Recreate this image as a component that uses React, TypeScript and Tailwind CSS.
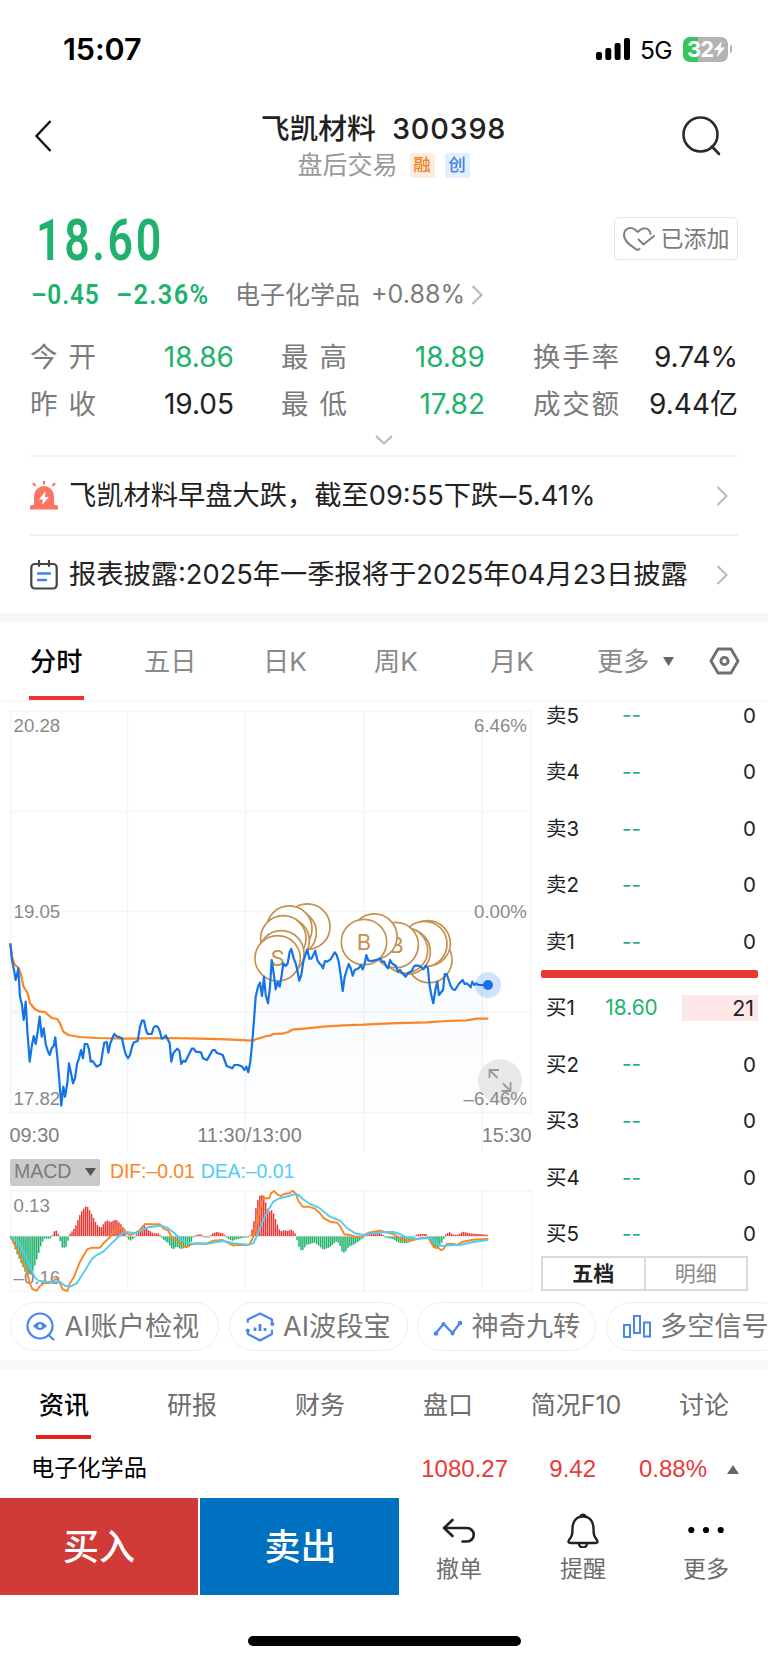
import type { ReactNode } from 'react'

// chart samples are stored at 3x density, [x, y, x, y, ...]
const PRICE_AM = [31,130,36,180,42,210,47,240,50,228,55,205,60,290,66,315,71,360,77,305,82,390,89,485,95,440,101,408,107,432,113,395,119,350,125,410,131,385,137,432,143,452,149,465,155,445,161,438,166,412,172,470,178,540,184,617,190,560,195,590,202,550,207,490,213,520,219,550,225,535,231,492,237,475,243,450,249,475,254,432,262,432,267,448,272,485,278,483,284,492,290,500,302,493,308,455,313,428,320,426,325,458,331,430,337,415,343,402,349,408,366,415,372,445,378,465,384,475,390,465,396,440,402,427,413,423,420,380,426,362,432,362,438,390,443,402,455,402,461,382,467,378,473,380,479,392,485,416,491,414,497,406,503,418,509,430,514,485,520,460,526,452,532,446,538,452,544,492,550,482,556,485,562,473,575,446,581,446,587,455,603,457,609,475,621,480,638,450,644,450,650,458,668,465,680,498,697,505,703,495,715,495,727,500,733,510,739,500]
const PRICE_PM = [25,577,31,545,37,485,42,420,47,350,54,320,60,308,66,348,72,290,77,345,84,370,90,320,95,240,101,280,107,328,113,305,119,320,125,285,130,250,137,258,143,250,149,215,154,207,161,235,167,250,172,270,178,302,184,285,190,245,196,225,202,208,208,236,214,236,220,225,226,212,232,240,238,250,244,255,249,265,255,243,261,245,272,238,284,217,290,225,296,245,302,285,308,333,314,290,320,270,326,252,332,265,338,287,344,270,356,265,362,255,368,268,374,250,379,225,385,242,397,243,415,238,421,235,427,245,433,245,439,260,445,265,450,240,456,250,468,258,474,275,480,270,486,278,497,290,503,280,515,273,521,260,527,256,540,258,550,268,558,257,564,265,568,310,574,345,580,370,586,330,592,305,597,345,609,330,614,282,620,282,626,300,632,318,638,328,645,330,656,312,668,300,674,312,680,310,686,315,692,322,697,305,703,315,709,310,715,315,745,315]
const AVG_AM = [31,130,37,175,45,195,55,203,62,220,70,258,83,280,90,310,105,328,118,334,135,336,155,354,172,357,180,370,190,395,205,405,240,411,290,414,380,416,500,414,600,416,680,418]
const AVG_PM = [38,482,50,477,80,468,90,467,100,462,125,461,145,456,157,449,200,445,250,440,310,436,370,434,450,430,560,427,620,423,680,421,710,416,745,416]
const DIF_AM = [31,379,40,395,55,425,70,465,80,480,88,515,97,537,110,542,120,528,135,518,155,518,165,508,172,508,180,520,188,538,202,543,210,520,222,500,240,455,262,418,275,413,300,413,315,395,330,382,345,360,362,352,370,355,380,370,390,375,400,372,418,362,435,342,450,343,480,343,490,355,505,362,515,382,535,393,548,407,560,412,575,403,590,400,620,401,640,392,668,390,690,402,700,406]
const DIF_PM = [28,404,38,385,48,350,60,295,70,265,88,265,93,250,102,243,112,253,122,258,132,252,148,250,158,242,168,252,175,272,188,290,205,290,225,296,240,310,252,325,270,335,292,338,302,352,313,373,330,375,345,380,365,380,385,368,420,362,440,367,460,372,480,385,500,394,520,390,540,385,565,383,575,400,582,412,595,413,603,420,610,418,620,402,640,402,650,405,668,395,700,389,745,387]
const DEA_AM = [31,379,45,388,60,405,75,435,90,468,103,500,115,512,140,515,165,515,180,515,195,527,210,530,230,520,250,490,275,448,290,435,310,425,340,395,370,367,385,367,410,370,425,360,445,352,480,347,500,352,520,367,545,390,570,401,620,401,670,393,700,400]
const DEA_PM = [25,404,40,400,52,375,70,330,85,300,100,275,120,264,150,257,165,252,175,254,188,267,210,282,235,292,270,320,300,332,320,353,345,370,370,375,400,370,430,367,460,366,480,372,500,383,530,386,570,384,590,400,605,408,630,406,660,405,700,396,745,390]
// macd histogram envelope, [x, height, ...]
const HIST = [31,0,36,-12,48,-45,60,-72,77,-110,95,-115,110,-70,125,-20,135,-5,150,-8,158,4,166,20,172,12,179,-4,184,-32,196,-35,202,-25,207,3,225,25,243,72,260,92,272,72,290,35,302,24,319,48,332,42,348,50,366,32,378,5,384,-8,392,-12,402,-5,412,8,430,35,443,20,460,8,475,8,482,2,488,-8,505,-20,518,-40,530,-30,542,-38,568,-30,580,-3,590,4,604,5,613,-3,628,-3,638,8,650,12,668,8,676,2,682,-6,697,-13,712,-8,735,-3,748,-3,755,15,762,45,768,85,774,110,782,125,792,120,798,97,806,72,815,78,822,65,830,40,838,20,845,14,852,18,862,15,875,20,883,12,888,3,892,-15,898,-35,905,-45,913,-35,920,-25,945,-18,970,-40,990,-32,1008,-15,1017,-20,1028,-50,1035,-48,1045,-32,1065,-22,1080,-12,1092,-3,1100,8,1140,8,1152,2,1160,-4,1180,-8,1195,-18,1220,-20,1240,-12,1245,3,1258,6,1282,6,1287,-8,1295,-25,1305,-38,1320,-30,1332,-5,1338,6,1348,12,1360,4,1375,4,1388,13,1410,8,1435,6,1465,4]

const MARKS_SELL = [[202, 140], [161, 158], [148, 146], [140, 182], [130, 175], [124, 220], [113, 235]]
const MARKS_BUY = [[568, 240], [563, 190], [553, 192], [503, 215], [495, 211], [467, 195], [403, 170], [372, 186]]

function place(data: number[], ox: number, oy: number) {
  const out: string[] = []
  for (let i = 0; i < data.length; i += 2) out.push(`${(ox + data[i] / 3).toFixed(1)},${(oy + data[i + 1] / 3).toFixed(1)}`)
  return out.join(' ')
}

function histAt(x: number) {
  for (let i = 2; i < HIST.length; i += 2) {
    if (x <= HIST[i]) {
      const t = (x - HIST[i - 2]) / (HIST[i] - HIST[i - 2])
      return HIST[i - 1] + t * (HIST[i + 1] - HIST[i - 1])
    }
  }
  return 0
}

const pricePoints = place(PRICE_AM, 0, 900) + ' ' + place(PRICE_PM, 240, 880)
const avgPoints = place(AVG_AM, 0, 900) + ' ' + place(AVG_PM, 240, 880)
const bars = Array.from({ length: 244 }, (_, i) => {
  const x = 34 + i * 5.87
  return { x: x / 3, h: histAt(x) / 3 }
})

function Chevron({ className }: { className?: string }) {
  return (
    <svg className={className} viewBox="0 0 12 20" fill="none" stroke="#b8b8b8" strokeWidth="2">
      <path d="M1.5 1 L10.5 10 L1.5 19" />
    </svg>
  )
}

function StatusBar() {
  return (
    <div className="flex h-[98px] items-center pl-[63px] pr-[36px]">
      <span className="mt-[1px] text-[30.5px] font-semibold leading-none tracking-[-0.1px] text-black">15:07</span>
      <svg className="ml-auto mr-[10px] h-[22px] w-[34px]" viewBox="0 0 34 22">
        <rect x="0" y="14" width="6" height="8" rx="2" />
        <rect x="9.3" y="10" width="6" height="12" rx="2" />
        <rect x="18.6" y="5" width="6" height="17" rx="2" />
        <rect x="28" y="0" width="6" height="22" rx="2" />
      </svg>
      <span className="mr-[11px] mt-[2px] w-[32px] text-[24.5px] leading-none tracking-[-0.6px] text-black">5G</span>
      <div className="relative flex h-[25px] w-[45px] items-center overflow-hidden rounded-[7px] bg-[#b3b3b3] pl-[4px]">
        <div className="absolute inset-y-0 left-0 w-[15px] bg-[#34c759]" />
        <span className="relative text-[22px] font-bold leading-none tracking-[-1px] text-white">32</span>
        <svg className="relative ml-[1px] h-[16px] w-[11px]" viewBox="0 0 11 16" fill="#fff">
          <path d="M8 0 L0 9 H4.6 L3 16 L11 6.6 H6.4 Z" />
        </svg>
      </div>
      <div className="ml-[2px] h-[8px] w-[2px] rounded-r-full bg-[#b3b3b3]" />
    </div>
  )
}

function Header() {
  return (
    <div className="flex h-[100px] items-start justify-between pl-[34px] pr-[47px]">
      <svg className="mt-[21px] h-[34px] w-[18px]" viewBox="0 0 18 34" fill="none" stroke="#111" strokeWidth="2.4">
        <path d="M16.5 2 L2.5 17 L16.5 32" />
      </svg>
      <div className="ml-[34px] flex flex-col items-center">
        <div className="mt-[15px] flex h-[32px] items-center gap-[16px] text-[28.8px] font-medium leading-none text-[#222]">
          <span>飞凯材料</span>
          <span className="tracking-[0.8px]">300398</span>
        </div>
        <div className="mt-[7px] flex h-[26px] items-center text-[25px] leading-none text-[#999]">
          <span className="mr-[12px]">盘后交易</span>
          <span className="mr-[10px] flex h-[25px] w-[25px] items-center justify-center rounded-[2px] bg-[#fdeee2] text-[17.5px] font-medium text-[#f5811f]">融</span>
          <span className="flex h-[25px] w-[25px] items-center justify-center rounded-[2px] bg-[#e5eefd] text-[17.5px] font-medium text-[#4480ee]">创</span>
        </div>
      </div>
      <svg className="mt-[18px] h-[40px] w-[40px]" viewBox="0 0 40 40" fill="none" stroke="#2a2a33" strokeWidth="2.6" strokeLinecap="round">
        <circle cx="19.5" cy="18.5" r="17" />
        <path d="M31 30.5 L38 38" />
      </svg>
    </div>
  )
}

function Stat({ label, value, color }: { label: string; value: string; color: string }) {
  return (
    <>
      <span className="flex justify-between text-[#7b7b7b]">{[...label].map(c => <span key={c}>{c}</span>)}</span>
      <span className={`text-right text-[28px] ${color}`}>{value}</span>
    </>
  )
}

function Quote() {
  const green = 'text-[#20b26c]'
  return (
    <div className="h-[257px]">
      <div className="flex h-[79px] items-start justify-between pl-[36px] pr-[30px] pt-[9px]">
        <span className="origin-left scale-x-[0.77] font-[Roboto] text-[58px] font-semibold leading-[67px] tracking-[3.4px] text-[#20b26c]">18.60</span>
        <div className="mt-[10px] flex h-[43px] w-[124px] items-center justify-center gap-[6px] rounded-[4px] border border-[#e8e8e8] pt-[1px] text-[23px] leading-none text-[#7b7b7b]">
          <svg className="h-[26px] w-[32px]" viewBox="0 0 32 26" fill="none" stroke="#808080" strokeWidth="2" strokeLinecap="round" strokeLinejoin="round">
            <path d="M27.5 8 C27 3 21 0 16.5 4.5 L14.8 6 L13 4.5 C8.500 -0.5 1 2.500 1 9 C1 16 9 20.500 13.500 23.500 Q15 24.500 16.500 22.800" />
            <path d="M15.500 13.500 L20.500 18.500 L31 10" />
          </svg>
          <span>已添加</span>
        </div>
      </div>
      <div className="flex h-[36px] items-center pl-[31px] leading-none">
        <span className="w-[85px]">
          <span className="inline-block origin-left scale-x-[0.86] font-[Roboto] text-[28.5px] font-semibold tracking-[0.9px] text-[#20b26c]">–0.45</span>
        </span>
        <span className="w-[119px]">
          <span className="inline-block origin-left scale-x-[0.89] font-[Roboto] text-[28.5px] font-semibold tracking-[1.5px] text-[#20b26c]">–2.36%</span>
        </span>
        <span className="w-[136px] text-[25px] text-[#7b7b7b]">电子化学品</span>
        <span className="w-[100px] whitespace-nowrap text-[25.1px] text-[#7b7b7b]">+0.88%</span>
        <Chevron className="h-[20px] w-[12px]" />
      </div>
      <div className="mt-[20.500px] grid grid-cols-[66px_138px_47px_66px_138px_48px_86px_119px] pl-[30px] text-[27.5px] leading-[47px]">
        <Stat label="今开" value="18.86" color={green} /><span />
        <Stat label="最高" value="18.89" color={green} /><span />
        <Stat label="换手率" value="9.74%" color="text-[#222]" />
        <Stat label="昨收" value="19.05" color="text-[#222]" /><span />
        <Stat label="最低" value="17.82" color={green} /><span />
        <Stat label="成交额" value="9.44亿" color="text-[#222]" />
      </div>
      <svg className="mx-auto mt-[7px] h-[10px] w-[18px]" viewBox="0 0 18 10" fill="none" stroke="#bbb" strokeWidth="2.2">
        <path d="M1 1 L9 8.500 L17 1" />
      </svg>
    </div>
  )
}

function Notice({ icon, children }: { icon: ReactNode; children: ReactNode }) {
  return (
    <div className="mx-[30px] flex h-[79px] items-center border-t-2 border-[#f2f2f2] text-[27.250px] leading-none text-[#222]">
      <span className="mr-[11px] w-[28px]">{icon}</span>
      <span className="whitespace-nowrap">{children}</span>
      <Chevron className="ml-auto mr-[10px] h-[20px] w-[12px]" />
    </div>
  )
}

function ChartTabs() {
  return (
    <div className="flex h-[80px] items-center border-b-2 border-[#f7f7f7] pl-[30px] pr-[28px] text-[26.200px] leading-none text-[#8a8a8a]">
      <span className="relative flex h-[78px] w-[114px] items-center pt-[3px] font-medium text-black">
        分时
        <span className="absolute bottom-0 left-[-1px] h-[4px] w-[55px] bg-[#ee3431]" />
      </span>
      <span className="w-[119px] pt-[3px]">五日</span>
      <span className="w-[111px] pt-[3px]">日K</span>
      <span className="w-[116px] pt-[3px]">周K</span>
      <span className="w-[107px] pt-[3px]">月K</span>
      <span className="w-[66px] pt-[3px]">更多</span>
      <svg className="h-[9px] w-[11px]" viewBox="0 0 11 9" fill="#666"><path d="M0 0 H11 L5.500 9 Z" /></svg>
      <svg className="ml-auto h-[28px] w-[31px]" viewBox="0 0 31 28" fill="none" stroke="#6f6f6f" strokeWidth="2.8" strokeLinejoin="round">
        <path d="M9 2 H22 L29 14 L22 26 H9 L2 14 Z" />
        <circle cx="15.500" cy="14" r="3.600" />
      </svg>
    </div>
  )
}

function PriceChart() {
  return (
    <svg className="block h-[450px] w-[541px]" viewBox="0 702 541 450">
      <defs>
        <linearGradient id="area" x1="0" y1="0" x2="0" y2="1">
          <stop offset="0" stopColor="#1673e6" stopOpacity="0.035" />
          <stop offset="1" stopColor="#1673e6" stopOpacity="0.01" />
        </linearGradient>
      </defs>
      <g fill="none" stroke="#f5f5f5" strokeWidth="1.500">
        <path d="M10.500 711.500 H531 V1112.500 H10.500 Z M10 811.500 H531 M10 911.500 H531 M10 1012 H531" />
        <path d="M127.500 711 V1152 M245.500 711 V1152 M364 711 V1152 M482 711 V1152" />
      </g>
      <g fill="#fff" stroke="#c4924f" strokeWidth="1.700">
        {MARKS_SELL.map(([x, y], i) => <circle key={i} cx={240 + x / 3} cy={880 + y / 3} r="22.700" />)}
        {MARKS_BUY.slice(0, 6).map(([x, y], i) => <circle key={i} cx={240 + x / 3} cy={880 + y / 3} r="22.700" />)}
      </g>
      <text x="396.500" y="953" textAnchor="middle" fontSize="22" fill="#c4924f">B</text>
      <g fill="#fff" stroke="#c4924f" strokeWidth="1.700">
        {MARKS_BUY.slice(6).map(([x, y], i) => <circle key={i} cx={240 + x / 3} cy={880 + y / 3} r="22.700" />)}
      </g>
      <text x="364" y="950" textAnchor="middle" fontSize="22" fill="#c4924f">B</text>
      <text x="277.500" y="966" textAnchor="middle" fontSize="22" fill="#c4924f">S</text>
      <polygon points={`10.500,1112 ${pricePoints} 488,1112`} fill="url(#area)" />
      <polyline points={avgPoints} fill="none" stroke="#fb8621" strokeWidth="2.200" strokeLinejoin="round" />
      <polyline points={pricePoints} fill="none" stroke="#1673e6" strokeWidth="2.200" strokeLinejoin="round" />
      <circle cx="488" cy="985" r="13" fill="#1673e6" fillOpacity="0.200" />
      <circle cx="488" cy="985" r="5" fill="#1673e6" />
      <circle cx="500" cy="1081" r="22" fill="#e6e6e6" fillOpacity="0.900" />
      <g fill="none" stroke="#999" strokeWidth="1.800">
        <path d="M489.500 1078 V1070 H499 M490 1070.500 L497.500 1078" />
        <path d="M501.500 1091 H510.500 V1082 M503 1083.500 L510 1090.500" />
      </g>
      <g fontSize="18.700" fill="#8a8a8a" className="font-['Liberation_Sans']">
        <text x="13.500" y="731.500">20.28</text>
        <text x="13.500" y="918">19.05</text>
        <text x="13.500" y="1105">17.82</text>
        <text x="527" y="731.500" textAnchor="end">6.46%</text>
        <text x="527" y="918" textAnchor="end">0.00%</text>
        <text x="527" y="1105" textAnchor="end">–6.46%</text>
      </g>
      <g fontSize="19.900" fill="#808080" className="font-['Liberation_Sans']">
        <text x="9.500" y="1142">09:30</text>
        <text x="249.500" y="1142" textAnchor="middle" letterSpacing="0.1">11:30/13:00</text>
        <text x="531.500" y="1142" textAnchor="end">15:30</text>
      </g>
    </svg>
  )
}

function MacdChart() {
  return (
    <svg className="block h-[104px] w-[541px]" viewBox="0 1190 541 104">
      <g fill="none" stroke="#f5f5f5" strokeWidth="1.500">
        <path d="M10.500 1191 H531.500 V1291.500 H10.500 Z M127.500 1191 V1291 M245.500 1191 V1291 M364 1191 V1291 M482 1191 V1291" />
        <path d="M10 1236.300 H488" stroke="#d9d9d9" strokeWidth="0.800" />
      </g>
      {bars.map(b => (
        <rect key={b.x} x={b.x - 0.75} y={b.h > 0 ? 1236 - b.h : 1236.500} width="1.500" height={Math.max(Math.abs(b.h), 0.8)} fill={b.h > 0 ? '#e93a37' : '#20b26c'} />
      ))}
      <g fontSize="18.700" fill="#8a8a8a" className="font-['Liberation_Sans']">
        <text x="13.500" y="1211.500">0.13</text>
        <text x="13.500" y="1284">–0.16</text>
      </g>
      <g fill="none" strokeWidth="1.900" strokeLinejoin="round">
        <polyline points={place(DIF_AM, 0, 1110) + ' ' + place(DIF_PM, 240, 1110)} stroke="#fb8621" />
        <polyline points={place(DEA_AM, 0, 1110) + ' ' + place(DEA_PM, 240, 1110)} stroke="#4fcdf3" />
      </g>
    </svg>
  )
}

function BookRow({ label, price = '--', vol = '0' }: { label: string; price?: string; vol?: string }) {
  return (
    <div className="flex h-[56.6px] items-center leading-none">
      <span className="w-[48px] pl-[5px] text-[20.5px] text-[#222]">{label}</span>
      <span className="w-[85px] text-center text-[20.8px] text-[#20b26c]">{price}</span>
      <span className={vol === '0' ? 'ml-[8px] w-[76px] pr-[2px] text-right text-[20.5px] text-[#222]' : 'ml-[8px] h-[26px] w-[76px] bg-[#fde7e7] pr-[4px] text-right text-[21.5px] leading-[26px] text-[#222]'}>{vol}</span>
    </div>
  )
}

function OrderBook() {
  return (
    <div className="flex w-[227px] flex-col">
      <div className="mt-[-14.500px] h-[282.500px]">
        {[5, 4, 3, 2, 1].map(n => <BookRow key={n} label={`卖${n}`} />)}
      </div>
      <div className="h-[8px] w-[217px] rounded-[2px] bg-[#e83836]" />
      <div className="mt-[2px]">
        <BookRow label="买1" price="18.60" vol="21" />
        {[2, 3, 4, 5].map(n => <BookRow key={n} label={`买${n}`} />)}
      </div>
      <div className="mt-[-7px] flex h-[35px] w-[207px] border-2 border-[#dadada] text-[21px] leading-none">
        <span className="flex flex-1 items-center justify-center border-r-2 border-[#dadada] pt-[1px] font-bold text-[#222]">五档</span>
        <span className="flex flex-1 items-center justify-center pt-[1px] text-[#8a8a8a]">明细</span>
      </div>
    </div>
  )
}

function Chip({ icon, label, width }: { icon: ReactNode; label: string; width: string }) {
  return (
    <div className={`flex h-[49px] shrink-0 items-center gap-[8.500px] rounded-full border-[1.500px] border-[#ededed] pl-[15px] text-[27.200px] leading-none text-[#777] ${width}`}>
      <svg className="h-[30px] w-[30px] shrink-0" viewBox="0 0 30 30" fill="none" stroke="#4a86ee" strokeWidth="2.200" strokeLinecap="round">{icon}</svg>
      <span className="whitespace-nowrap">{label}</span>
    </div>
  )
}

function Tools() {
  return (
    <div className="flex gap-[9.500px] overflow-hidden pb-[9px] pl-[10px] pt-[9px]">
      <Chip width="w-[209px]" label="AI账户检视" icon={<>
        <circle cx="14" cy="14" r="12.500" />
        <path d="M22.500 23 L27.500 27.500" />
        <path d="M7 14 Q14 6 21 14 Q14 22 7 14 Z" fill="#4a86ee" stroke="none" />
        <circle cx="14" cy="14" r="2" fill="#fff" stroke="none" />
      </>} />
      <Chip width="w-[179px]" label="AI波段宝" icon={<>
        <path d="M2.800 10 V7.500 L15 1.500 L27 7.500 V11 M2.800 19 V22 L15 28.500 L27 22 V18.500" strokeLinejoin="round" />
        <path d="M10 15.500 V19 M15 12 V19 M20 16 V19" strokeWidth="2.800" strokeLinecap="butt" />
        <circle cx="27.300" cy="12" r="2" fill="#4a86ee" stroke="none" /><circle cx="2.800" cy="18.500" r="2" fill="#4a86ee" stroke="none" />
      </>} />
      <Chip width="w-[179px]" label="神奇九转" icon={<>
        <path d="M3 21 L10.500 12 L19.500 21 L27 11" />
        <g fill="#4a86ee" stroke="none"><circle cx="3" cy="21.500" r="2.300" /><circle cx="10.500" cy="12" r="2" /><circle cx="19.500" cy="21.500" r="2" /><circle cx="27" cy="11" r="2.300" /></g>
      </>} />
      <Chip width="w-[180px]" label="多空信号" icon={<g strokeLinecap="butt" strokeWidth="2">
        <rect x="2" y="13" width="6" height="12" /><rect x="12" y="4" width="6" height="17" /><rect x="22" y="10.500" width="6" height="14" />
      </g>} />
    </div>
  )
}

function InfoTabs() {
  return (
    <>
      <div className="flex h-[69px] items-center text-[25px] leading-none text-[#6c6c6c]">
        {['资讯', '研报', '财务', '盘口', '简况F10', '讨论'].map((t, i) => (
          <span key={t} className={i === 0 ? 'relative flex h-full w-[128px] items-center justify-center pt-[2px] font-medium text-black' : 'w-[128px] pt-[2px] text-center'}>
            {t}
            {i === 0 && <span className="absolute bottom-0 left-[36px] h-[4px] w-[55px] bg-[#e6211d]" />}
          </span>
        ))}
      </div>
      <div className="flex h-[59px] items-center pl-[31px] pr-[29px] pt-[1px] font-['Liberation_Sans','Noto_Sans_CJK_SC',sans-serif] text-[24px] leading-none text-[#e93a37]">
        <span className="flex-1 text-[23.200px] text-black">电子化学品</span>
        <span className="w-[88px] text-right">1080.27</span>
        <span className="w-[88px] text-right">9.42</span>
        <span className="w-[111px] text-right">0.88%</span>
        <svg className="ml-[20px] h-[9px] w-[12px]" viewBox="0 0 12 9" fill="#666"><path d="M0 9 H12 L6 0 Z" /></svg>
      </div>
    </>
  )
}

function BottomBar() {
  return (
    <div className="flex h-[97px] leading-none">
      <div className="mr-[2px] flex w-[198px] items-center justify-center bg-[#d03b38] text-[36px] font-medium text-white">买入</div>
      <div className="flex w-[199px] items-center justify-center bg-[#0070c1] pl-[2px] text-[36px] font-medium text-white">卖出</div>
      <div className="grid w-[369px] grid-cols-3 text-center text-[23px] text-[#6c6c6c]">
        <div className="flex flex-col items-center pr-[3px] pt-[14px]">
          <svg className="mb-[10px] h-[36px] w-[36px]" viewBox="0 0 36 36" fill="none" stroke="#222" strokeWidth="2.600" strokeLinecap="round" strokeLinejoin="round">
            <path d="M11.500 8 L3 16 L11.500 24 M3 16 H26 A6.500 6.500 0 0 1 26 29.500 H21.500" />
          </svg>
          撤单
        </div>
        <div className="flex flex-col items-center pr-[1px] pt-[14px]">
          <svg className="mb-[10px] h-[36px] w-[36px]" viewBox="0 0 36 36" fill="none" stroke="#222" strokeWidth="2.400" strokeLinejoin="round">
            <path d="M18 4.500 C10.500 4.500 7.500 10.500 7.500 16.500 C7.500 22.500 7 24.500 4 28 Q2.500 31 5.500 31 H30.500 Q33.500 31 32 28 C29 24.500 28.500 22.500 28.500 16.500 C28.500 10.500 25.500 4.500 18 4.500 Z" />
            <path d="M15.500 4.500 A2.600 2.600 0 0 1 20.500 4.500 M14 31.500 A4 4 0 0 0 22 31.500" />
          </svg>
          提醒
        </div>
        <div className="flex flex-col items-center pr-[1px] pt-[14px]">
          <svg className="mb-[10px] h-[36px] w-[36px]" viewBox="0 0 36 36">
            <circle cx="3.300" cy="18" r="3.100" /><circle cx="18" cy="18" r="3.100" /><circle cx="32.700" cy="18" r="3.100" />
          </svg>
          更多
        </div>
      </div>
    </div>
  )
}

export default function App() {
  return (
    <div className="h-[1663px] w-[768px] overflow-hidden bg-white font-['Inter','Noto_Sans_CJK_SC',sans-serif]">
      <StatusBar />
      <Header />
      <Quote />
      <Notice icon={
        <svg className="h-[29px] w-[28px]" viewBox="0 0 28 29" fill="#fa7363">
          <path d="M4 24 V15 A10 10 0 0 1 24 15 V24 H26 Q28 24 28 26 V28.500 H0 V26 Q0 24 2 24 Z" />
          <path d="M14 0 V3.500 M3 2 L5.500 5 M25 2 L22.500 5" stroke="#fa7363" strokeWidth="2" />
          <path d="M15.500 10 L9 18.500 H13 L12 24 L19 16 H15 Z" fill="#fff" />
        </svg>
      }>飞凯材料早盘大跌，截至09:55下跌<span className="mx-[2.500px] inline-block scale-x-125">–</span>5.41%</Notice>
      <Notice icon={
        <svg className="h-[30px] w-[28px]" viewBox="0 0 28 30" fill="none" stroke="#444" strokeWidth="2.200" strokeLinecap="round">
          <rect x="1.300" y="4" width="25.400" height="24.500" rx="3.500" />
          <path d="M9 1 V6 M19 1 V6" />
          <path d="M8 13.500 H20 M8 20 H16" stroke="#4480ee" strokeWidth="2.400" />
        </svg>
      }>报表披露:2025年一季报将于2025年04月23日披露</Notice>
      <div className="h-[9px] bg-[#f8f8f8]" />
      <ChartTabs />
      <div className="flex h-[591px]">
        <div className="w-[541px]">
          <PriceChart />
          <div className="flex h-[38px] items-center pl-[10px] pt-[2px] font-['Liberation_Sans'] text-[19.500px] leading-none">
            <span className="mr-[10px] flex h-[27px] w-[90px] items-center justify-between rounded-[2px] bg-[#cacaca] pl-[4px] pr-[4px] text-[#7b7b7b]">
              MACD
              <svg className="h-[8px] w-[11px]" viewBox="0 0 11 8" fill="#555"><path d="M0 0 H11 L5.500 8 Z" /></svg>
            </span>
            <span className="mr-[6px] tracking-[-0.1px] text-[#fb8621]">DIF:–0.01</span>
            <span className="tracking-[-0.1px] text-[#4fcdf3]">DEA:–0.01</span>
          </div>
          <MacdChart />
        </div>
        <OrderBook />
      </div>
      <Tools />
      <div className="h-[10px] bg-[#f8f8f8]" />
      <InfoTabs />
      <BottomBar />
      <div className="mx-auto mt-[41px] h-[10px] w-[273px] rounded-full bg-black" />
    </div>
  )
}
